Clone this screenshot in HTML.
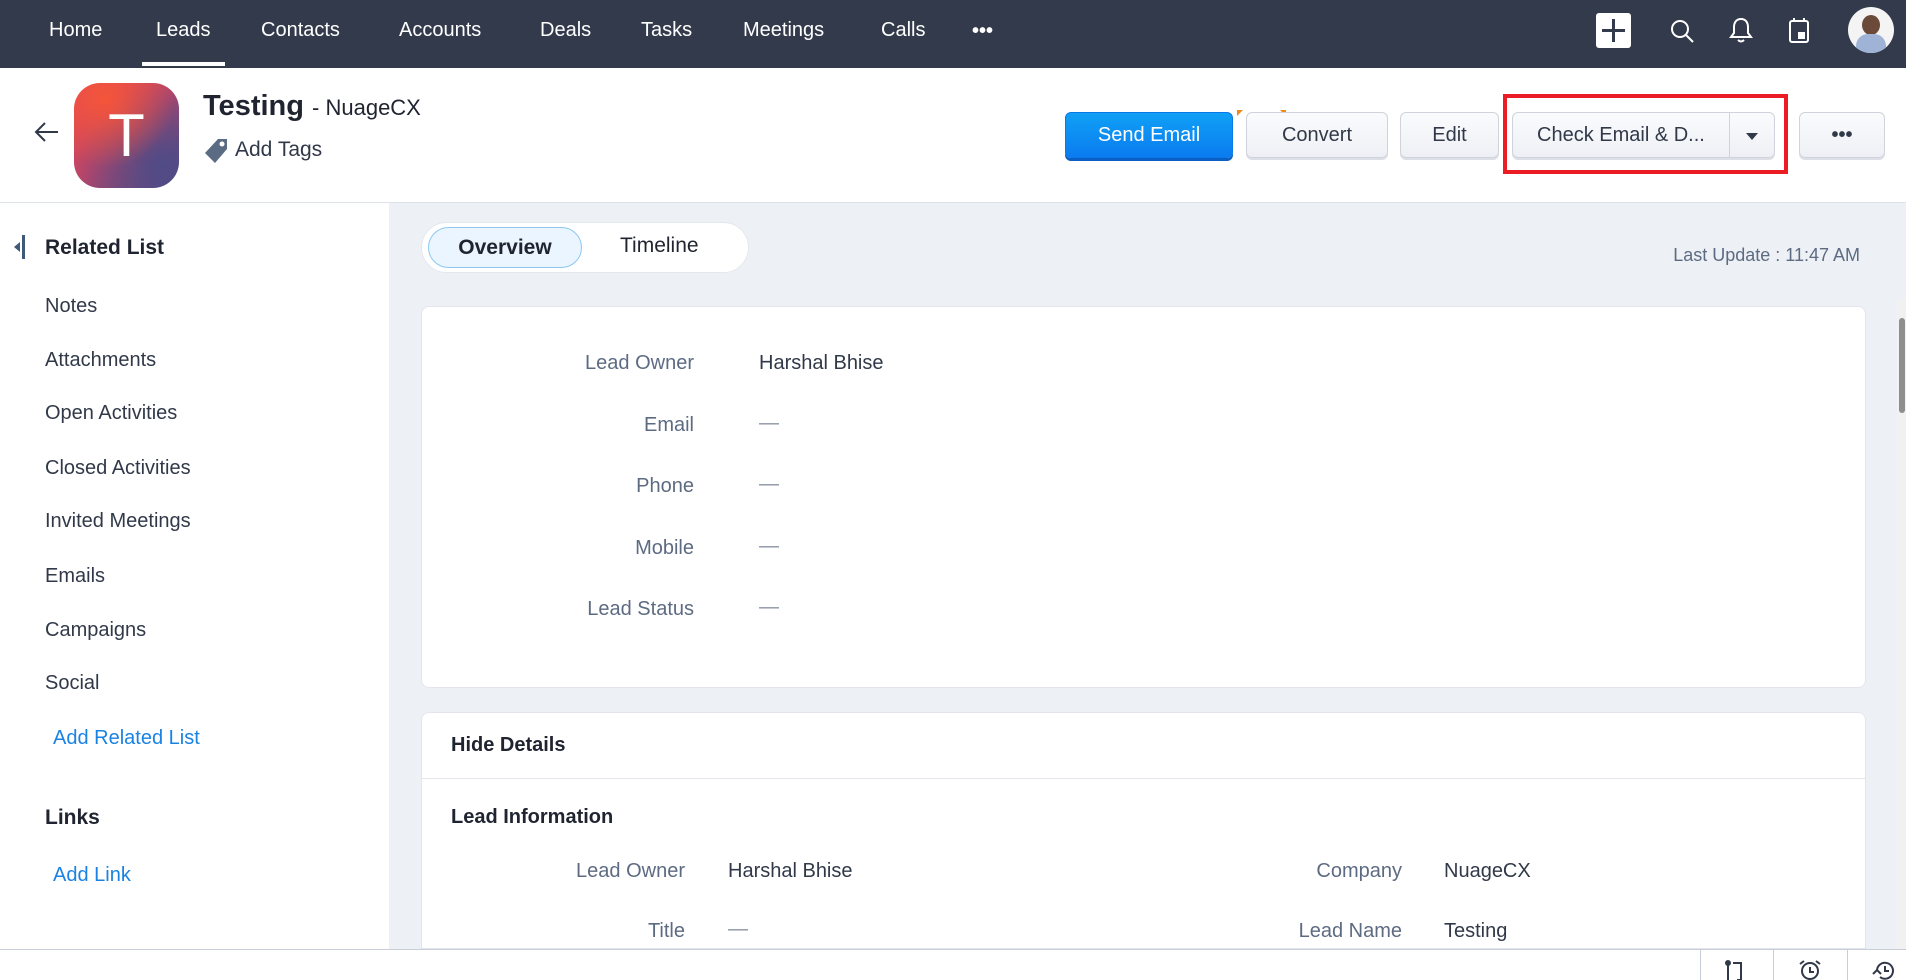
<!DOCTYPE html>
<html><head><meta charset="utf-8"><style>
*{margin:0;padding:0;box-sizing:border-box}
html{width:1906px;height:980px;overflow:hidden}
body{width:1906px;height:980px;overflow:hidden;background:#edf0f5;font-family:"Liberation Sans",sans-serif;position:relative;color:#313949}
.a{position:absolute;white-space:nowrap}
.nav{position:absolute;left:0;top:0;width:1906px;height:68px;background:#333a4b}
.nav .t{position:absolute;top:19px;color:#fff;font-size:20px}
.hdr{position:absolute;left:0;top:68px;width:1906px;height:135px;background:#fff;border-bottom:1px solid #dde1e8}
.btn{position:absolute;top:112px;height:46px;border:1px solid #cfd4dc;border-radius:6px;background:linear-gradient(#fafbfd,#eef0f5);font-size:20px;color:#313949;text-align:center;line-height:44px;box-shadow:0 2px 0 #dcdfe6}
.side{position:absolute;left:0;top:203px;width:389px;height:746px;background:#fff}
.si{position:absolute;left:45px;font-size:20px;color:#313949}
.card{position:absolute;left:421px;width:1445px;background:#fff;border-radius:8px;border:1px solid #e2e6ec}
.lb{position:absolute;font-size:20px;color:#5d6b82;text-align:right}
.vl{position:absolute;font-size:20px;color:#313949}
</style></head><body>
<div class="nav">
<span class="t" style="left:49px">Home</span>
<span class="t" style="left:156px">Leads</span>
<span class="t" style="left:261px">Contacts</span>
<span class="t" style="left:399px">Accounts</span>
<span class="t" style="left:540px">Deals</span>
<span class="t" style="left:641px">Tasks</span>
<span class="t" style="left:743px">Meetings</span>
<span class="t" style="left:881px">Calls</span>
<span class="t" style="left:972px;font-weight:bold;top:20px">•••</span>
<div class="a" style="left:142px;top:62px;width:83px;height:4px;background:#fff"></div>
<div class="a" style="left:1596px;top:13px;width:35px;height:35px;background:#fff;border-radius:3px"></div>
<div class="a" style="left:1612px;top:19px;width:3px;height:23px;background:#333a4b"></div>
<div class="a" style="left:1602px;top:29px;width:23px;height:3px;background:#333a4b"></div>
<svg class="a" style="left:1668px;top:16px" width="30" height="30" viewBox="0 0 30 30" fill="none" stroke="#fff" stroke-width="2"><circle cx="12" cy="13" r="8"/><path d="M18 19l7 7"/></svg>
<svg class="a" style="left:1728px;top:15px" width="26" height="30" viewBox="0 0 26 30" fill="none" stroke="#fff" stroke-width="2"><path d="M13 4c-5 0-7 4-7 8v6l-3 4h20l-3-4v-6c0-4-2-8-7-8zM10 25q3 3 6 0"/></svg>
<svg class="a" style="left:1787px;top:16px" width="24" height="30" viewBox="0 0 24 30" fill="none" stroke="#fff" stroke-width="2"><rect x="3" y="5" width="18" height="21" rx="2"/><path d="M7 2v4M17 2v4"/><rect x="12" y="17" width="5" height="5" fill="#fff"/></svg>
<div class="a" style="left:1848px;top:7px;width:46px;height:46px;border-radius:50%;background:#f4f4f4;overflow:hidden"><div style="position:absolute;left:14px;top:8px;width:18px;height:20px;border-radius:50%;background:#6b4a3a"></div><div style="position:absolute;left:8px;top:27px;width:30px;height:24px;border-radius:12px 12px 0 0;background:#9fb3d6"></div></div>
</div>
<div class="hdr"></div>
<svg class="a" style="left:34px;top:120px" width="26" height="24" viewBox="0 0 26 24" fill="none" stroke="#313949" stroke-width="2"><path d="M24 12H3M11 3l-9 9 9 9"/></svg>
<div class="a" style="left:74px;top:83px;width:105px;height:105px;border-radius:26px;background:radial-gradient(circle at 30% 15%,#f4553a,transparent 60%),radial-gradient(circle at 85% 80%,#4f4b86,transparent 70%),linear-gradient(135deg,#ec4a4f,#b8456a 50%,#524a84);color:#fff;font-size:60px;text-align:center;line-height:105px">T</div>
<div class="a" style="left:203px;top:90px;font-size:29px;font-weight:bold;color:#1f2430">Testing <span style="font-size:22px;font-weight:normal">- NuageCX</span></div>
<svg class="a" style="left:204px;top:137px" width="26" height="28" viewBox="0 0 26 28"><path d="M14 2h9v10L11 26 1 16z" fill="#5c6b84"/><circle cx="18" cy="7" r="2.5" fill="#fff"/></svg>
<div class="a" style="left:235px;top:138px;font-size:21px;color:#313949">Add Tags</div>
<div class="btn" style="left:1065px;width:168px;background:linear-gradient(#10a0f5,#0a7cf0);border-color:#0a78e8;color:#fff;box-shadow:0 3px 0 #0a5fc4">Send Email</div>
<div class="a" style="left:1237px;top:110px;width:0;height:0;border-top:6px solid #f08a1c;border-right:6px solid transparent"></div>
<div class="a" style="left:1280px;top:110px;width:0;height:0;border-top:6px solid #f08a1c;border-left:6px solid transparent"></div>
<div class="btn" style="left:1246px;width:142px">Convert</div>
<div class="btn" style="left:1400px;width:99px">Edit</div>
<div class="btn" style="left:1512px;width:263px;text-align:left;padding-left:24px">Check Email &amp; D...</div>
<div class="a" style="left:1729px;top:113px;width:1px;height:44px;background:#cfd4dc"></div>
<div class="a" style="left:1746px;top:133px;border-left:6px solid transparent;border-right:6px solid transparent;border-top:7px solid #313949"></div>
<div class="a" style="left:1503px;top:94px;width:285px;height:80px;border:4px solid #ec1c24"></div>
<div class="btn" style="left:1799px;width:86px;font-weight:bold;line-height:44px">•••</div>

<div class="side">
<div class="a" style="left:14px;top:39px;border-top:5px solid transparent;border-bottom:5px solid transparent;border-right:6px solid #3f5a78"></div>
<div class="a" style="left:22px;top:32px;width:3px;height:24px;background:#3f5a78"></div>
<div class="si" style="top:33px;font-weight:bold;font-size:21px;color:#1f2430">Related List</div>
<div class="si" style="top:92px">Notes</div>
<div class="si" style="top:146px">Attachments</div>
<div class="si" style="top:199px">Open Activities</div>
<div class="si" style="top:254px">Closed Activities</div>
<div class="si" style="top:307px">Invited Meetings</div>
<div class="si" style="top:362px">Emails</div>
<div class="si" style="top:416px">Campaigns</div>
<div class="si" style="top:469px">Social</div>
<div class="si" style="top:524px;left:53px;color:#1a82e2">Add Related List</div>
<div class="si" style="top:603px;font-weight:bold;font-size:21px;color:#1f2430">Links</div>
<div class="si" style="top:661px;left:53px;color:#1a82e2">Add Link</div>
</div>

<div class="a" style="left:421px;top:222px;width:328px;height:51px;background:#fff;border-radius:26px;border:1px solid #e4e8ee"></div>
<div class="a" style="left:428px;top:227px;width:154px;height:41px;background:#eaf5ff;border:1px solid #8cc8f2;border-radius:21px;text-align:center;line-height:39px;font-size:21px;font-weight:bold;color:#1f2430">Overview</div>
<div class="a" style="left:620px;top:234px;font-size:21px;color:#1f2430">Timeline</div>
<div class="a" style="left:1660px;top:245px;font-size:18px;color:#5d6b82;width:200px;text-align:right">Last Update : 11:47 AM</div>

<div class="card" style="top:306px;height:382px">
<div class="lb" style="right:1171px;top:45px">Lead Owner</div><div class="vl" style="left:337px;top:45px">Harshal Bhise</div>
<div class="lb" style="right:1171px;top:107px">Email</div><div class="vl" style="left:337px;top:105px;color:#8a93a3">—</div>
<div class="lb" style="right:1171px;top:168px">Phone</div><div class="vl" style="left:337px;top:166px;color:#8a93a3">—</div>
<div class="lb" style="right:1171px;top:230px">Mobile</div><div class="vl" style="left:337px;top:228px;color:#8a93a3">—</div>
<div class="lb" style="right:1171px;top:291px">Lead Status</div><div class="vl" style="left:337px;top:289px;color:#8a93a3">—</div>
</div>
<div class="card" style="top:712px;height:237px;border-radius:8px 8px 0 0">
<div class="vl" style="left:29px;top:21px;font-weight:bold;color:#1f2430">Hide Details</div>
<div class="a" style="left:0;top:65px;width:1443px;height:1px;background:#e2e6ec"></div>
<div class="vl" style="left:29px;top:93px;font-weight:bold;color:#1f2430">Lead Information</div>
<div class="lb" style="right:1180px;top:147px">Lead Owner</div><div class="vl" style="left:306px;top:147px">Harshal Bhise</div>
<div class="lb" style="right:1180px;top:207px">Title</div><div class="vl" style="left:306px;top:205px;color:#8a93a3">—</div>
<div class="lb" style="right:463px;top:147px">Company</div><div class="vl" style="left:1022px;top:147px">NuageCX</div>
<div class="lb" style="right:463px;top:207px">Lead Name</div><div class="vl" style="left:1022px;top:207px">Testing</div>
</div>

<div class="a" style="left:1897px;top:300px;width:9px;height:649px;background:#f1f1f1"></div>
<div class="a" style="left:1899px;top:318px;width:6px;height:95px;background:#8e8e8e;border-radius:3px"></div>
<div class="a" style="left:0;top:949px;width:1906px;height:31px;background:#fff;border-top:1px solid #c8ced8"></div>
<div class="a" style="left:1700px;top:949px;width:1px;height:31px;background:#c8ced8"></div>
<div class="a" style="left:1773px;top:949px;width:1px;height:31px;background:#c8ced8"></div>
<div class="a" style="left:1847px;top:949px;width:1px;height:31px;background:#c8ced8"></div>
<svg class="a" style="left:1724px;top:960px" width="22" height="20" viewBox="0 0 22 20" fill="none" stroke="#313949" stroke-width="2"><circle cx="4" cy="3" r="2" fill="#313949"/><path d="M4 5v15M9 3h8v17h-4"/></svg>
<svg class="a" style="left:1796px;top:958px" width="28" height="22" viewBox="0 0 28 22" fill="none" stroke="#313949" stroke-width="2"><circle cx="14" cy="13" r="8"/><path d="M14 9v5h4M4 6l4-3M24 6l-4-3"/></svg>
<svg class="a" style="left:1868px;top:958px" width="28" height="22" viewBox="0 0 28 22" fill="none" stroke="#313949" stroke-width="2"><path d="M9 13a8 8 0 1 1 3 6"/><path d="M17 8v5h4M5 16l4-4 4 4"/></svg>
</body></html>
